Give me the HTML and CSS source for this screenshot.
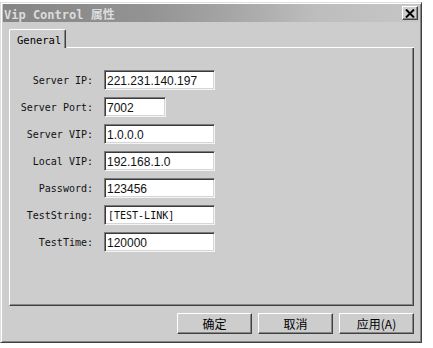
FILE: index.html
```html
<!DOCTYPE html>
<html>
<head>
<meta charset="utf-8">
<link rel="stylesheet" href="styles.css">
</head>
<body>
<div class="dialog">
  <div class="titlebar">
    <span class="title">Vip Control 属性</span>
    <span class="close"><svg width="10" height="9" viewBox="0 0 10 9"><path d="M1 0.5 L9 8.5 M9 0.5 L1 8.5" stroke="#000" stroke-width="2"/></svg></span>
  </div>
  <div class="body">
    <div class="tabs"><div class="tab">General</div><div class="tabline"></div></div>
    <div class="panel">
      <div class="row"><label class="lbl">Server IP:</label><div class="field wide">221.231.140.197</div></div>
      <div class="row"><label class="lbl">Server Port:</label><div class="field narrow">7002</div></div>
      <div class="row"><label class="lbl">Server VIP:</label><div class="field wide">1.0.0.0</div></div>
      <div class="row"><label class="lbl">Local VIP:</label><div class="field wide">192.168.1.0</div></div>
      <div class="row"><label class="lbl">Password:</label><div class="field wide">123456</div></div>
      <div class="row"><label class="lbl">TestString:</label><div class="field wide mono">[TEST-LINK]</div></div>
      <div class="row"><label class="lbl">TestTime:</label><div class="field wide">120000</div></div>
    </div>
    <div class="buttons">
      <div class="btn">确定</div>
      <div class="btn">取消</div>
      <div class="btn">应用(A)</div>
    </div>
  </div>
</div>
</body>
</html>
```
FILE: styles.css
```css
html, body {
  margin: 0;
  padding: 0;
  background: #ffffff;
}
body {
  padding-top: 2px;
  font-family: "DejaVu Sans Mono", "Noto Sans CJK SC", monospace;
}
.dialog {
  width: 416px;
  height: 337px;
  background: #cdcdcd;
  border: 1px solid;
  border-color: #dedede #404040 #404040 #dedede;
  box-shadow: inset 1px 1px #ffffff, inset -1px -1px #868686;
  padding: 1px 2px;
  display: flex;
  flex-direction: column;
}
.titlebar {
  height: 18px;
  flex: none;
  background: linear-gradient(to right, #858585 0%, #939393 35%, #a6a6a6 55%, #bdbdbd 75%, #c6c6c6 100%);
  display: flex;
  align-items: center;
  justify-content: space-between;
  padding: 0 1px 0 1px;
}
.title {
  color: #dcdcdc;
  font-family: "DejaVu Sans Mono", "Noto Sans CJK SC", monospace;
  font-weight: bold;
  font-size: 12px;
}
.close {
  width: 14px;
  height: 12px;
  background: #cdcdcd;
  border: 1px solid;
  border-color: #ffffff #404040 #404040 #ffffff;
  box-shadow: inset -1px -1px #868686;
  display: flex;
  align-items: center;
  justify-content: center;
}
.body {
  flex: 1;
  display: flex;
  flex-direction: column;
  padding: 7px 5px 0 6px;
}
.tabs {
  display: flex;
  height: 19px;
  flex: none;
}
.tab {
  width: 57px;
  height: 19px;
  box-sizing: border-box;
  border-top: 1px solid #ffffff;
  border-left: 1px solid #ffffff;
  border-right: 1px solid #404040;
  box-shadow: inset -1px 0 #868686;
  border-radius: 2px 2px 0 0;
  font-size: 10.5px;
  color: #000;
  padding: 4px 0 0 7px;
  margin-right: 1px;
}
.tabline {
  flex: 1;
  align-self: flex-end;
  height: 1px;
  background: #ffffff;
}
.panel {
  height: 258px;
  flex: none;
  box-sizing: border-box;
  border-left: 1px solid #ffffff;
  border-right: 1px solid #404040;
  border-bottom: 1px solid #404040;
  box-shadow: inset -1px -1px #868686;
  padding: 22px 0 0 0;
  display: flex;
  flex-direction: column;
  gap: 7px;
}
.row {
  display: flex;
  align-items: center;
  height: 20px;
}
.lbl {
  width: 83px;
  text-align: right;
  font-size: 10px;
  color: #111;
  margin-right: 11px;
  padding-top: 1px;
}
.field {
  height: 20px;
  box-sizing: border-box;
  background: #ffffff;
  border: 1px solid;
  border-color: #7a7a7a #f4f4f4 #f4f4f4 #7a7a7a;
  box-shadow: inset 1px 1px #3a3a3a, inset -1px -1px #d6d6d6;
  font-family: "Liberation Sans", Arial, sans-serif;
  font-size: 12px;
  color: #111;
  padding: 3px 0 0 2px;
  line-height: 14px;
  white-space: nowrap;
}
.field.wide { width: 111px; }
.field.narrow { width: 62px; }
.field.mono {
  font-family: "DejaVu Sans Mono", monospace;
  font-size: 10px;
  padding-left: 3px;
}
.buttons {
  display: flex;
  justify-content: flex-end;
  gap: 6px;
  margin-top: 7px;
}
.btn {
  width: 75px;
  height: 21px;
  box-sizing: border-box;
  border: 1px solid;
  border-color: #ffffff #404040 #404040 #ffffff;
  box-shadow: inset -1px -1px #868686;
  font-family: "Noto Sans CJK SC", sans-serif;
  font-size: 12px;
  color: #000;
  display: flex;
  align-items: center;
  justify-content: center;
}
```
